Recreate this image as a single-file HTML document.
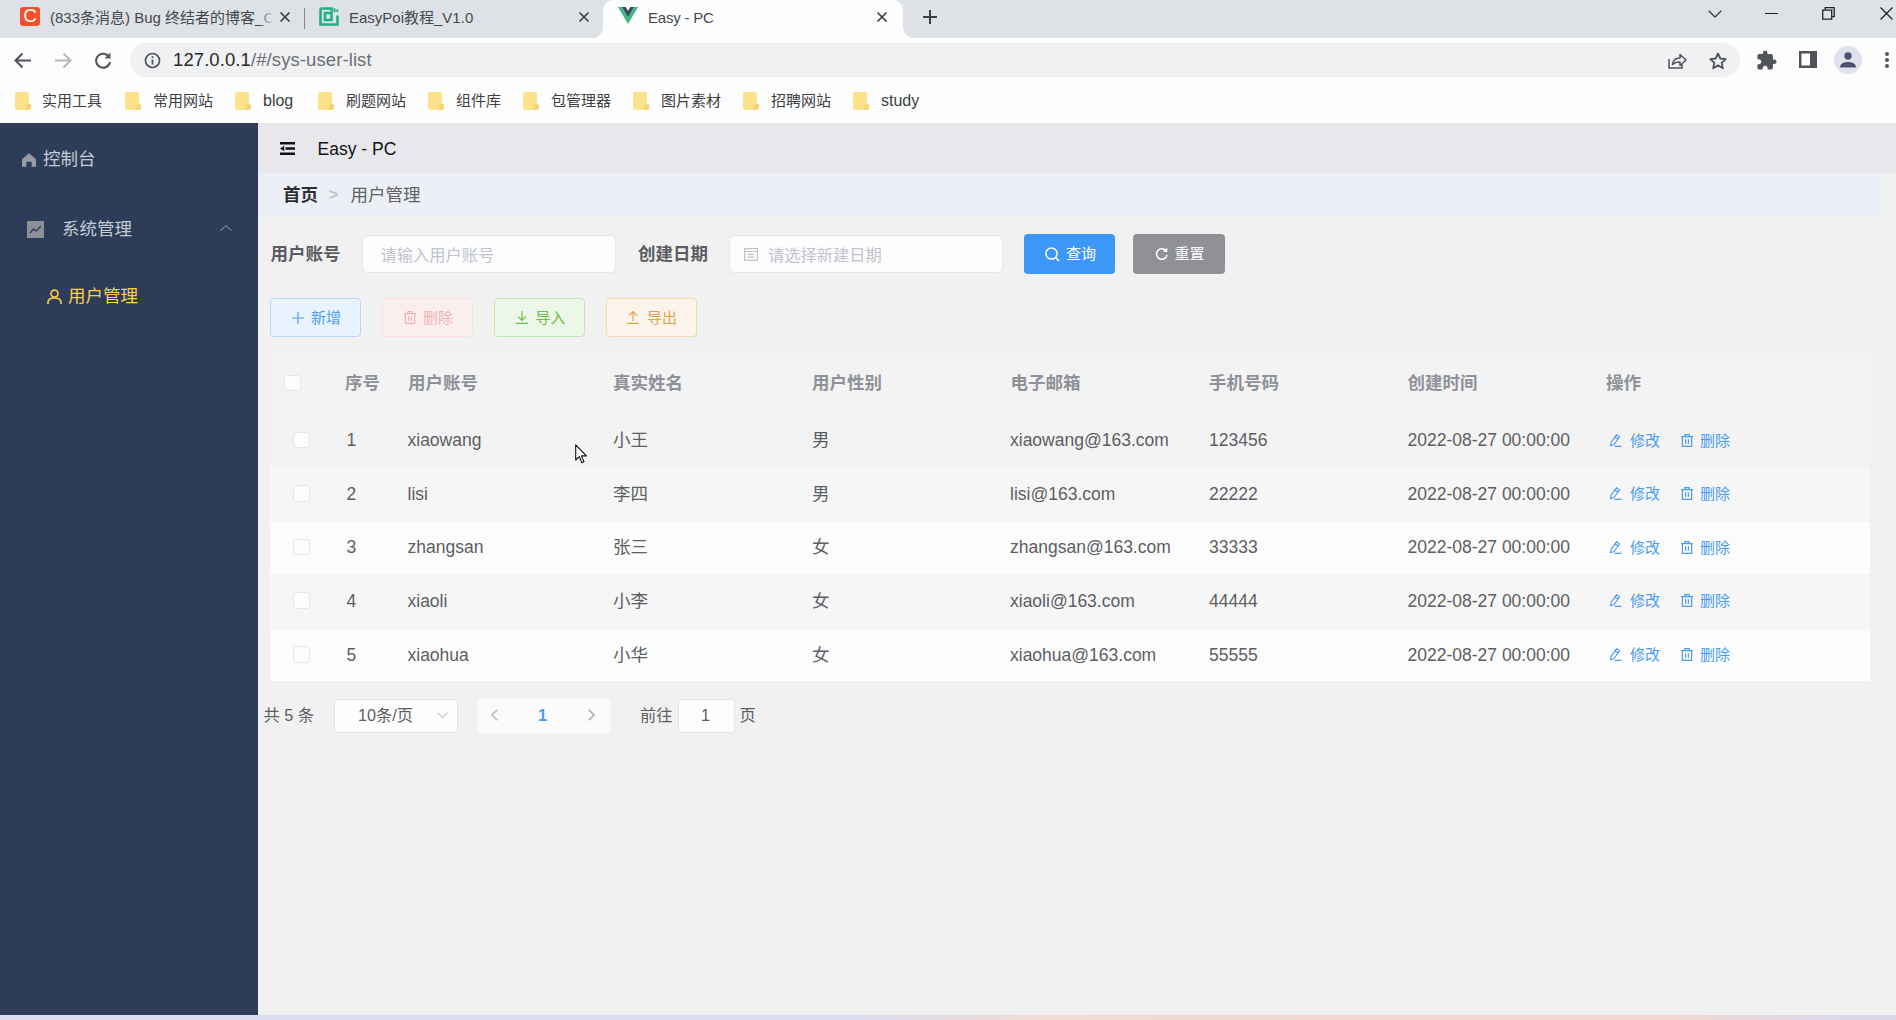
<!DOCTYPE html>
<html lang="zh-CN">
<head>
<meta charset="utf-8">
<title>Easy - PC</title>
<style>
*{box-sizing:border-box;margin:0;padding:0}
html,body{width:1896px;height:1020px;overflow:hidden;background:#f1f1f1}
body{position:relative;font-family:"Liberation Sans","Noto Sans CJK SC",sans-serif;color:#606266;-webkit-font-smoothing:antialiased}
.a{position:absolute}
.t{position:absolute;white-space:nowrap;line-height:20px;height:20px}
svg{position:absolute;overflow:visible}
/* ---------- browser chrome ---------- */
#tabstrip{left:0;top:0;width:1896px;height:38px;background:#dee1e6}
#toolbar{left:0;top:38px;width:1896px;height:44px;background:#fdfdfd}
#omni{left:130px;top:43px;width:1610px;height:34px;border-radius:17px;background:#f0f1f3}
#bmbar{left:0;top:82px;width:1896px;height:41px;background:#fdfdfd}
#acttab{left:603px;top:0;width:300px;height:38px;background:#fdfdfd;border-radius:10px 10px 0 0}
.ui{font-family:"Liberation Sans","Noto Sans CJK SC",sans-serif;color:#3c4043}
.tabt{font-size:15px;color:#45494d}
.bm{font-size:15px;color:#3c4043}
.fold{position:absolute;top:92px;width:14px;height:18px;background:#fde28c;border-radius:2px}
.fold:after{content:"";position:absolute;right:-1.500px;bottom:0;width:5px;height:6px;background:#f6d474;border-radius:2px 1px 2px 0}
/* ---------- app ---------- */
#side{left:0;top:123px;width:258px;height:892px;background:#2e3d57}
#hdr{left:258px;top:123px;width:1638px;height:50px;background:#e8e8ec}
#crumb{left:258px;top:173px;width:1625px;height:44px;background:#eceff5}
#bottom{left:0;top:1015px;width:1896px;height:5px;background:linear-gradient(90deg,#dcdcf0 0,#dcdcf0 45%,#f0dcd4 55%,#f0d8d0 88%,#dcd8ec 97%)}
.inp{background:#fdfdfe;border:1px solid #e3e5ea;border-radius:5px}
.ph{font-size:16.250px;color:#bfc3cb}
.btn{width:91px;height:39px;border:1px solid;border-radius:4px}
.cb{width:16.500px;height:16.500px;background:#fcfcfd;border:1px solid #e4e6eb;border-radius:3px}
.th{font-size:17.500px;font-weight:bold;color:#8e9197}
.td{font-size:17.500px;color:#5c5e63}
.lk{font-size:15px;color:#4b9cf0}
.pg{font-size:16.250px;color:#5c5e63}
</style>
</head>
<body>
<!-- ================= browser chrome ================= -->
<div class="a" id="tabstrip"></div>
<div class="a" id="toolbar"></div>
<div class="a" id="omni"></div>
<div class="a" id="bmbar"></div>
<div class="a" id="acttab"></div>
<!-- tab 1 -->
<div class="a" style="left:20px;top:7px;width:20px;height:19px;background:#f4502a;border-radius:3px"></div>
<div class="t" style="left:22px;top:6px;font-size:19px;color:#fff;width:16px;text-align:center">C</div>
<div class="t tabt" id="tab1t" style="left:50px;top:7.500px;width:222px;overflow:hidden">(833条消息) Bug 终结者的博客_C</div>
<div class="a" style="left:258px;top:4px;width:16px;height:28px;background:linear-gradient(90deg,rgba(222,225,230,0),#dee1e6)"></div>
<svg style="left:279px;top:11px" width="12" height="12" viewBox="0 0 12 12"><path d="M1.5 1.5l9 9M10.500 1.5l-9 9" stroke="#3c4043" stroke-width="1.7" fill="none"/></svg>
<div class="a" style="left:304px;top:8px;width:1px;height:21px;background:#83878d"></div>
<!-- tab 2 -->
<svg style="left:319px;top:7px" width="20" height="19" viewBox="0 0 20 19"><path d="M1.500 1.500h11v3M1.500 1.500v16h17v-9M6 6h6.500v7h-6.500z" stroke="#20b087" stroke-width="2.600" fill="none"/><path d="M15.500 1.200v4M18.300 2.500v2.500" stroke="#20b087" stroke-width="2" fill="none"/></svg>
<div class="t tabt" id="tab2t" style="left:349px;top:7.500px">EasyPoi教程_V1.0</div>
<svg style="left:578px;top:11px" width="12" height="12" viewBox="0 0 12 12"><path d="M1.500 1.500l9 9M10.500 1.500l-9 9" stroke="#3c4043" stroke-width="1.700" fill="none"/></svg>
<!-- tab 3 (active) -->
<div class="a" style="left:593px;top:28px;width:10px;height:10px;background:radial-gradient(circle at 0 0,#dee1e6 9.5px,#fdfdfd 10px)"></div>
<div class="a" style="left:903px;top:28px;width:10px;height:10px;background:radial-gradient(circle at 100% 0,#dee1e6 9.5px,#fdfdfd 10px)"></div>
<svg style="left:618px;top:7px" width="20" height="17" viewBox="0 0 20 17"><path d="M0 0h4l6 10.300 6-10.300h4l-10 17z" fill="#41b883"/><path d="M4 0h3.700l2.300 4 2.300-4h3.700l-6 10.300z" fill="#35495e"/></svg>
<div class="t tabt" id="tab3t" style="left:648px;top:7.500px;letter-spacing:-.2px;">Easy - PC</div>
<svg style="left:876px;top:11px" width="12" height="12" viewBox="0 0 12 12"><path d="M1.500 1.500l9 9M10.500 1.500l-9 9" stroke="#3c4043" stroke-width="1.700" fill="none"/></svg>
<svg style="left:922px;top:9px" width="16" height="16" viewBox="0 0 16 16"><path d="M8 1v14M1 8h14" stroke="#3c4043" stroke-width="2" fill="none"/></svg>
<!-- window controls -->
<svg style="left:1708px;top:10px" width="14" height="8" viewBox="0 0 14 8"><path d="M.7.700l6.300 6.300 6.300-6.300" stroke="#3c4043" stroke-width="1.300" fill="none"/></svg>
<div class="a" style="left:1765px;top:12.500px;width:13px;height:1.500px;background:#222"></div>
<svg style="left:1822px;top:7px" width="13" height="13" viewBox="0 0 13 13"><path d="M.7 3.200h9v9h-9zM3.200 3.200v-2.500h9v9h-2.500" stroke="#222" stroke-width="1.300" fill="none"/></svg>
<svg style="left:1880px;top:7px" width="13" height="13" viewBox="0 0 13 13"><path d="M.5.500l12 12M12.500.500l-12 12" stroke="#222" stroke-width="1.300" fill="none"/></svg>
<!-- toolbar -->
<svg style="left:14px;top:52px" width="18" height="17" viewBox="0 0 18 17"><path d="M17 8.500h-15M8.500 1.500l-7 7 7 7" stroke="#50545a" stroke-width="2" fill="none"/></svg>
<svg style="left:54px;top:52px" width="18" height="17" viewBox="0 0 18 17"><path d="M1 8.500h15M9.500 1.500l7 7-7 7" stroke="#b5b8bd" stroke-width="2" fill="none"/></svg>
<svg style="left:94px;top:51px" width="18" height="18" viewBox="0 0 18 18"><path d="M15.200 6.200a7 7 0 1 0 .8 4.800" stroke="#50545a" stroke-width="2" fill="none"/><path d="M16.500 1.500v6h-6z" fill="#50545a"/></svg>
<svg style="left:144px;top:52px" width="17" height="17" viewBox="0 0 17 17"><circle cx="8.500" cy="8.500" r="7" stroke="#50545a" stroke-width="1.700" fill="none"/><path d="M8.500 7.500v5M8.500 4.300v1.800" stroke="#50545a" stroke-width="1.800" fill="none"/></svg>
<div class="t" id="urlt" style="left:173px;top:50px;font-size:18.500px;letter-spacing:.090px;color:#27292c">127.0.0.1<span style="color:#6b6f75">/#/sys-user-list</span></div>
<svg style="left:1668px;top:52px" width="19" height="17" viewBox="0 0 19 17"><path d="M1 7v9h13v-4" stroke="#50545a" stroke-width="1.500" fill="none"/><path d="M4.500 12.500c.5-4 3-6.500 7.500-6.500v-3.500l6 5.500-6 5.500v-3.500c-3.500 0-5.500.500-7.500 2.500z" stroke="#50545a" stroke-width="1.500" fill="none" stroke-linejoin="round"/></svg>
<svg style="left:1709px;top:52px" width="18" height="17" viewBox="0 0 18 17"><path d="M9 1.500l2.300 5 5.400.600-4 3.700 1.100 5.400-4.800-2.800-4.800 2.800 1.100-5.400-4-3.700 5.400-.600z" stroke="#50545a" stroke-width="1.800" fill="none" stroke-linejoin="round"/></svg>
<svg style="left:1757px;top:50px" width="20" height="20" viewBox="1.500 .500 22 22"><path d="M20.500 11H19V7c0-1.100-.900-2-2-2h-4V3.500C13 2.120 11.880 1 10.500 1S8 2.120 8 3.500V5H4c-1.100 0-1.990.900-1.990 2v3.800H3.500c1.490 0 2.700 1.210 2.700 2.700s-1.210 2.700-2.700 2.700H2V20c0 1.100.900 2 2 2h3.800v-1.500c0-1.490 1.210-2.700 2.700-2.700 1.490 0 2.700 1.210 2.700 2.700V22H17c1.100 0 2-.900 2-2v-4h1.500c1.380 0 2.500-1.120 2.500-2.500S21.880 11 20.500 11z" fill="#50545a"/></svg>
<svg style="left:1799px;top:51px" width="18" height="17" viewBox="0 0 18 17"><path d="M1.200 1.200h15.600v14.600h-15.600z" stroke="#50545a" stroke-width="2.400" fill="none"/><path d="M11 1.200h5.800v14.600h-5.800z" fill="#50545a"/></svg>
<div class="a" style="left:1834px;top:46px;width:28px;height:28px;border-radius:14px;background:#dfe2ec"></div>
<svg style="left:1839px;top:52px" width="18" height="16" viewBox="0 0 18 16"><circle cx="9" cy="4" r="3.700" fill="#4c5270"/><path d="M1 15.500c0-4 4-5.500 8-5.500s8 1.500 8 5.500z" fill="#4c5270"/></svg>
<div class="a" style="left:1885px;top:52px;width:4px;height:4px;border-radius:2px;background:#50545a;box-shadow:0 6px 0 #50545a,0 12px 0 #50545a"></div>
<!-- bookmarks -->
<i class="fold" style="left:15px"></i><div class="t bm" style="left:42px;top:91px">实用工具</div>
<i class="fold" style="left:125px"></i><div class="t bm" style="left:153px;top:91px">常用网站</div>
<i class="fold" style="left:235px"></i><div class="t bm" id="bmblog" style="left:263px;top:91px;font-size:16px">blog</div>
<i class="fold" style="left:318px"></i><div class="t bm" style="left:346px;top:91px">刷题网站</div>
<i class="fold" style="left:428px"></i><div class="t bm" style="left:456px;top:91px">组件库</div>
<i class="fold" style="left:523px"></i><div class="t bm" style="left:551px;top:91px">包管理器</div>
<i class="fold" style="left:633px"></i><div class="t bm" style="left:661px;top:91px">图片素材</div>
<i class="fold" style="left:743px"></i><div class="t bm" style="left:771px;top:91px">招聘网站</div>
<i class="fold" style="left:853px"></i><div class="t bm" id="bmstudy" style="left:881px;top:91px;font-size:16px">study</div>
<!--CHROME-END-->
<!-- ================= app ================= -->
<div class="a" id="side"></div>
<div class="a" id="hdr"></div>
<div class="a" id="crumb"></div>
<!-- sidebar -->
<svg style="left:22px;top:153px" width="14" height="14" viewBox="0 0 14 14"><path d="M7 .3l7 6v7.400h-4.300v-5h-5.400v5h-4.300v-7.400z" fill="#989ba3"/></svg>
<div class="t" style="left:43px;top:149px;font-size:17.500px;color:#c3cbd8">控制台</div>
<div class="a" style="left:27px;top:221px;width:17px;height:17px;background:#8d9096"></div>
<svg style="left:27px;top:221px" width="17" height="17" viewBox="0 0 17 17"><path d="M3 12l3.500-4 2.500 2 5-5" stroke="#3a4152" stroke-width="1.600" fill="none"/></svg>
<div class="t" style="left:62px;top:219px;font-size:17.500px;color:#c3cbd8">系统管理</div>
<svg style="left:219.500px;top:224.500px" width="12" height="6" viewBox="0 0 12 6"><path d="M.5 5.700l5.500-5 5.500 5" stroke="#7f8a9c" stroke-width="1.100" fill="none"/></svg>
<svg style="left:47px;top:288.500px" width="15" height="15" viewBox="0 0 15 15"><circle cx="7.500" cy="4.600" r="3.500" stroke="#f6ca4c" stroke-width="1.700" fill="none"/><path d="M1 15v-1.500c0-3 3-4.500 6.500-4.500s6.500 1.500 6.500 4.500v1.500" stroke="#f6ca4c" stroke-width="1.700" fill="none"/></svg>
<div class="t" style="left:68px;top:285.500px;font-size:17.500px;color:#fbce4e">用户管理</div>
<!-- header -->
<svg style="left:280px;top:142px" width="15" height="13" viewBox="0 0 15 13"><path d="M0 0h15v2.500h-15zM5.500 5.200h9.500v2.500h-9.500zM0 10.500h15v2.500h-15zM0 6.500l4.200-2.800v5.600z" fill="#111"/></svg>
<div class="t" id="ttl" style="left:317.500px;top:138.500px;font-size:17.500px;color:#111">Easy - PC</div>
<!-- breadcrumb -->
<div class="t" style="left:283px;top:184.500px;font-size:17.500px;font-weight:bold;color:#2c2e33">首页</div>
<div class="t" style="left:328.500px;top:184.500px;font-size:17px;font-weight:bold;color:#c3c5cd;font-family:'Liberation Sans',sans-serif">&gt;</div>
<div class="t" style="left:350.500px;top:184.500px;font-size:17.500px;color:#606266">用户管理</div>
<!-- filter row -->
<div class="t" style="left:270.500px;top:243.500px;font-size:17.500px;font-weight:bold;color:#5a5c61">用户账号</div>
<div class="a inp" style="left:361.500px;top:235px;width:254.500px;height:38px"></div>
<div class="t ph" style="left:380.500px;top:244.500px">请输入用户账号</div>
<div class="t" style="left:638px;top:243.500px;font-size:17.500px;font-weight:bold;color:#5a5c61">创建日期</div>
<div class="a inp" style="left:729px;top:235px;width:273.500px;height:38px"></div>
<svg style="left:743.500px;top:247px" width="14" height="14" viewBox="0 0 14 14"><path d="M.6 1.600h12.800v11.800h-12.800zM.6 4.500h12.800M3.600 7.300h6.800M3.600 10.200h6.800" stroke="#c0c4cc" stroke-width="1.200" fill="none"/></svg>
<div class="t ph" style="left:768px;top:244.500px">请选择新建日期</div>
<div class="a" style="left:1024px;top:234px;width:91px;height:40px;border-radius:4px;background:#3d97f7"></div>
<svg style="left:1045px;top:246.500px" width="15" height="15" viewBox="0 0 15 15"><circle cx="6.500" cy="6.500" r="5.600" stroke="#fff" stroke-width="1.500" fill="none"/><path d="M10.600 10.600l3.400 3.400" stroke="#fff" stroke-width="1.600" fill="none"/></svg>
<div class="t" style="left:1066px;top:244px;font-size:15px;color:#fff">查询</div>
<div class="a" style="left:1133px;top:234px;width:92px;height:40px;border-radius:4px;background:#8f9196"></div>
<svg style="left:1155px;top:247px" width="13" height="13" viewBox="0 0 13 13"><path d="M11.300 4.200a5.300 5.300 0 1 0 .700 3.800" stroke="#fff" stroke-width="1.500" fill="none"/><path d="M12.300 .800v4.200h-4.200z" fill="#fff"/></svg>
<div class="t" style="left:1174.500px;top:244px;font-size:15px;color:#fff">重置</div>
<!-- action buttons -->
<div class="a btn" style="left:270px;top:297.500px;background:#e9f3fd;border-color:#b5d6f8"></div>
<svg style="left:291.500px;top:311.500px" width="12" height="12" viewBox="0 0 12 12"><path d="M6 0v12M0 6h12" stroke="#4c9ff0" stroke-width="1.200" fill="none"/></svg>
<div class="t" style="left:311px;top:307.500px;font-size:15px;color:#4c9ff0">新增</div>
<div class="a btn" style="left:382px;top:297.500px;background:#fbeeee;border-color:#fbe0e0"></div>
<svg style="left:403.500px;top:311px" width="12" height="13" viewBox="0 0 12 13"><path d="M0 2.600h12M3.800 2.600v-2h4.400v2M1.400 2.600v9.800h9.200v-9.800M4.600 5.300v4.400M7.400 5.300v4.400" stroke="#f3b3b3" stroke-width="1.200" fill="none"/></svg>
<div class="t" style="left:423px;top:307.500px;font-size:15px;color:#f3b3b3">删除</div>
<div class="a btn" style="left:494px;top:297.500px;background:#edf7e8;border-color:#c4e5b4"></div>
<svg style="left:515.500px;top:311px" width="12" height="13" viewBox="0 0 12 13"><path d="M6 0v9M2 5.300l4 4 4-4M0 12.400h12" stroke="#6dbd45" stroke-width="1.200" fill="none"/></svg>
<div class="t" style="left:535.500px;top:307.500px;font-size:15px;color:#6dbd45">导入</div>
<div class="a btn" style="left:605.500px;top:297.500px;background:#fbf4ea;border-color:#f3dab3"></div>
<svg style="left:627px;top:311px" width="12" height="13" viewBox="0 0 12 13"><path d="M6 10v-9M2 4.700l4-4 4 4M0 12.400h12" stroke="#dfa349" stroke-width="1.200" fill="none"/></svg>
<div class="t" style="left:647px;top:307.500px;font-size:15px;color:#dfa349">导出</div>
<!-- table -->
<div class="a" style="left:270px;top:356px;width:1600px;height:326px;background:#f3f3f3"></div>
<div class="a" style="left:270px;top:522px;width:1600px;height:52px;background:#fcfcfc"></div>
<div class="a" style="left:270px;top:629px;width:1600px;height:52px;background:#fcfcfc"></div>
<div class="a" style="left:270px;top:681px;width:1600px;height:1px;background:#eeeff2"></div>
<div class="a" style="left:270px;top:468px;width:1600px;height:53px;background:#f6f6f6"></div>
<div class="a" style="left:270px;top:575px;width:1600px;height:53px;background:#f6f6f6"></div>
<div class="a cb" style="left:284px;top:374.500px"></div>
<div class="t th" style="left:345px;top:373px">序号</div>
<div class="t th" style="left:408px;top:373px">用户账号</div>
<div class="t th" style="left:613px;top:373px">真实姓名</div>
<div class="t th" style="left:812px;top:373px">用户性别</div>
<div class="t th" style="left:1010.5px;top:373px">电子邮箱</div>
<div class="t th" style="left:1209px;top:373px">手机号码</div>
<div class="t th" style="left:1407.5px;top:373px">创建时间</div>
<div class="t th" style="left:1606px;top:373px">操作</div>
<div class="a cb" style="left:293px;top:431.5px"></div>
<div class="t td" style="left:346.5px;top:430px">1</div>
<div class="t td" style="left:407.5px;top:430px">xiaowang</div>
<div class="t td" style="left:613px;top:430px">小王</div>
<div class="t td" style="left:812px;top:430px">男</div>
<div class="t td" style="left:1010px;top:430px">xiaowang@163.com</div>
<div class="t td" style="left:1209px;top:430px">123456</div>
<div class="t td" style="left:1407.500px;top:430px">2022-08-27 00:00:00</div>
<svg style="left:1608.500px;top:433.5px" width="13" height="13" viewBox="0 0 13 13"><path d="M7.600 .700l3 2.200-5.600 7.600-3.600 1.300.600-3.500zM6 2.800l3 2.200M5.500 12.400h7" stroke="#4b9cf0" stroke-width="1.100" fill="none" stroke-linejoin="round"/></svg>
<div class="t lk" style="left:1630px;top:430.5px">修改</div>
<svg style="left:1680.500px;top:433.5px" width="12" height="13" viewBox="0 0 12 13"><path d="M0 2.600h12M3.800 2.600v-2h4.400v2M1.400 2.600v9.800h9.200v-9.800M4.600 5.300v4.400M7.400 5.300v4.400" stroke="#4b9cf0" stroke-width="1.200" fill="none"/></svg>
<div class="t lk" style="left:1700px;top:430.5px">删除</div>
<div class="a cb" style="left:293px;top:485.25px"></div>
<div class="t td" style="left:346.5px;top:483.75px">2</div>
<div class="t td" style="left:407.5px;top:483.75px">lisi</div>
<div class="t td" style="left:613px;top:483.75px">李四</div>
<div class="t td" style="left:812px;top:483.75px">男</div>
<div class="t td" style="left:1010px;top:483.75px">lisi@163.com</div>
<div class="t td" style="left:1209px;top:483.75px">22222</div>
<div class="t td" style="left:1407.500px;top:483.75px">2022-08-27 00:00:00</div>
<svg style="left:1608.500px;top:487.25px" width="13" height="13" viewBox="0 0 13 13"><path d="M7.600 .700l3 2.200-5.600 7.600-3.600 1.300.600-3.500zM6 2.800l3 2.200M5.500 12.400h7" stroke="#4b9cf0" stroke-width="1.100" fill="none" stroke-linejoin="round"/></svg>
<div class="t lk" style="left:1630px;top:484.25px">修改</div>
<svg style="left:1680.500px;top:487.25px" width="12" height="13" viewBox="0 0 12 13"><path d="M0 2.600h12M3.800 2.600v-2h4.400v2M1.400 2.600v9.800h9.200v-9.800M4.600 5.300v4.400M7.400 5.300v4.400" stroke="#4b9cf0" stroke-width="1.200" fill="none"/></svg>
<div class="t lk" style="left:1700px;top:484.25px">删除</div>
<div class="a cb" style="left:293px;top:538.75px"></div>
<div class="t td" style="left:346.5px;top:537.25px">3</div>
<div class="t td" style="left:407.5px;top:537.25px">zhangsan</div>
<div class="t td" style="left:613px;top:537.25px">张三</div>
<div class="t td" style="left:812px;top:537.25px">女</div>
<div class="t td" style="left:1010px;top:537.25px">zhangsan@163.com</div>
<div class="t td" style="left:1209px;top:537.25px">33333</div>
<div class="t td" style="left:1407.500px;top:537.25px">2022-08-27 00:00:00</div>
<svg style="left:1608.500px;top:540.75px" width="13" height="13" viewBox="0 0 13 13"><path d="M7.600 .700l3 2.200-5.600 7.600-3.600 1.300.600-3.500zM6 2.800l3 2.200M5.500 12.400h7" stroke="#4b9cf0" stroke-width="1.100" fill="none" stroke-linejoin="round"/></svg>
<div class="t lk" style="left:1630px;top:537.75px">修改</div>
<svg style="left:1680.500px;top:540.75px" width="12" height="13" viewBox="0 0 12 13"><path d="M0 2.600h12M3.800 2.600v-2h4.400v2M1.400 2.600v9.800h9.200v-9.800M4.600 5.300v4.400M7.400 5.300v4.400" stroke="#4b9cf0" stroke-width="1.200" fill="none"/></svg>
<div class="t lk" style="left:1700px;top:537.75px">删除</div>
<div class="a cb" style="left:293px;top:592.25px"></div>
<div class="t td" style="left:346.5px;top:590.75px">4</div>
<div class="t td" style="left:407.5px;top:590.75px">xiaoli</div>
<div class="t td" style="left:613px;top:590.75px">小李</div>
<div class="t td" style="left:812px;top:590.75px">女</div>
<div class="t td" style="left:1010px;top:590.75px">xiaoli@163.com</div>
<div class="t td" style="left:1209px;top:590.75px">44444</div>
<div class="t td" style="left:1407.500px;top:590.75px">2022-08-27 00:00:00</div>
<svg style="left:1608.500px;top:594.25px" width="13" height="13" viewBox="0 0 13 13"><path d="M7.600 .700l3 2.200-5.600 7.600-3.600 1.300.600-3.500zM6 2.800l3 2.200M5.500 12.400h7" stroke="#4b9cf0" stroke-width="1.100" fill="none" stroke-linejoin="round"/></svg>
<div class="t lk" style="left:1630px;top:591.25px">修改</div>
<svg style="left:1680.500px;top:594.25px" width="12" height="13" viewBox="0 0 12 13"><path d="M0 2.600h12M3.800 2.600v-2h4.400v2M1.400 2.600v9.800h9.200v-9.800M4.600 5.300v4.400M7.400 5.300v4.400" stroke="#4b9cf0" stroke-width="1.200" fill="none"/></svg>
<div class="t lk" style="left:1700px;top:591.25px">删除</div>
<div class="a cb" style="left:293px;top:646.0px"></div>
<div class="t td" style="left:346.5px;top:644.5px">5</div>
<div class="t td" style="left:407.5px;top:644.5px">xiaohua</div>
<div class="t td" style="left:613px;top:644.5px">小华</div>
<div class="t td" style="left:812px;top:644.5px">女</div>
<div class="t td" style="left:1010px;top:644.5px">xiaohua@163.com</div>
<div class="t td" style="left:1209px;top:644.5px">55555</div>
<div class="t td" style="left:1407.500px;top:644.5px">2022-08-27 00:00:00</div>
<svg style="left:1608.500px;top:648.0px" width="13" height="13" viewBox="0 0 13 13"><path d="M7.600 .700l3 2.200-5.600 7.600-3.600 1.300.600-3.500zM6 2.800l3 2.200M5.500 12.400h7" stroke="#4b9cf0" stroke-width="1.100" fill="none" stroke-linejoin="round"/></svg>
<div class="t lk" style="left:1630px;top:645.0px">修改</div>
<svg style="left:1680.500px;top:648.0px" width="12" height="13" viewBox="0 0 12 13"><path d="M0 2.600h12M3.800 2.600v-2h4.400v2M1.400 2.600v9.800h9.200v-9.800M4.600 5.300v4.400M7.400 5.300v4.400" stroke="#4b9cf0" stroke-width="1.200" fill="none"/></svg>
<div class="t lk" style="left:1700px;top:645.0px">删除</div>
<svg style="left:575px;top:444px" width="13" height="20" viewBox="0 0 13 20"><path d="M.7 .800v15.200l3.600-3.300 2.600 6 2.100-.900-2.600-5.900h5z" fill="#fff" stroke="#111" stroke-width="1.100" stroke-linejoin="round"/></svg>
<!-- pagination -->
<div class="t pg" style="left:263.500px;top:705px">共 5 条</div>
<div class="a inp" style="left:334px;top:698.500px;width:123.500px;height:34px;border-radius:4px"></div>
<div class="t pg" style="left:358px;top:705px">10条/页</div>
<svg style="left:437px;top:711.500px" width="11" height="7" viewBox="0 0 11 7"><path d="M.5 .700l5 5 5-5" stroke="#c0c4cc" stroke-width="1.200" fill="none"/></svg>
<div class="a" style="left:477.500px;top:698.500px;width:132.500px;height:34px;background:#fbfbfc"></div>
<svg style="left:490.500px;top:709px" width="7" height="12" viewBox="0 0 7 12"><path d="M6.300 .700l-5.300 5.300 5.300 5.300" stroke="#b9bdc6" stroke-width="1.600" fill="none"/></svg>
<div class="t pg" style="left:538px;top:705px;font-weight:bold;color:#4a9df0">1</div>
<svg style="left:587.500px;top:709px" width="7" height="12" viewBox="0 0 7 12"><path d="M.7 .700l5.300 5.300-5.300 5.300" stroke="#a6aab3" stroke-width="1.600" fill="none"/></svg>
<div class="t pg" style="left:640px;top:705px">前往</div>
<div class="a inp" style="left:678px;top:698.500px;width:56.500px;height:34px;border-radius:4px"></div>
<div class="t pg" style="left:701px;top:705px">1</div>
<div class="t pg" style="left:739.500px;top:705px">页</div>
<!--APP3-->
<div class="a" id="bottom"></div>
</body>
</html>
